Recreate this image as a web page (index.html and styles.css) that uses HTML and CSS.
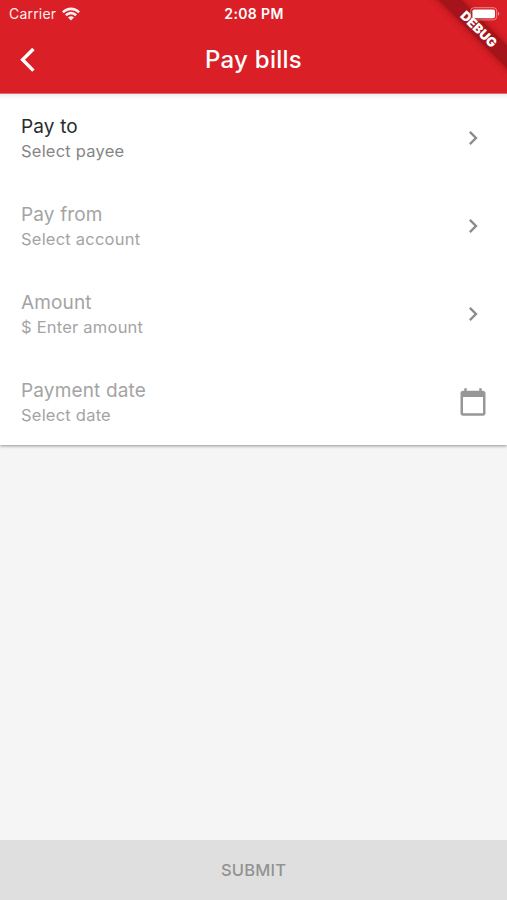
FILE: index.html
```
<!DOCTYPE html>
<html lang="en">
<head>
<meta charset="utf-8">
<title>Pay bills</title>
<link rel="stylesheet" href="styles.css">
</head>
<body>
<div class="screen">
  <header class="header">
    <div class="status">
      <div class="carrier"><span>Carrier</span>
        <svg class="wifi" viewBox="0 0 18 14"><path d="M0 4.4C5-.9 13-.9 18 4.4L16.2 6.2C12.2 2.1 5.8 2.1 1.8 6.2ZM3 7.4C6.5 4 11.5 4 15 7.4L13.2 9.2C10.8 6.9 7.2 6.9 4.8 9.2ZM6 10.5C7.8 8.9 10.2 8.9 12 10.5L9 13.6Z"/></svg>
      </div>
      <div class="clock">2:08 PM</div>
      <svg class="battery" viewBox="0 0 30 14"><rect x=".7" y=".7" width="26" height="12.2" rx="3.3" fill="none" stroke="#fff" stroke-opacity=".45"/><rect x="2.4" y="2.4" width="22.6" height="8.8" rx="1.8" fill="#fff"/><path d="M28 4.8Q30.6 6.8 28 8.8Z" fill="#fff" fill-opacity=".55"/></svg>
    </div>
    <div class="toolbar">
      <svg class="back" viewBox="0 0 16 26"><path d="M13.4 2 2.6 12.8l10.8 10.8"/></svg>
      <h1 class="title">Pay bills</h1>
    </div>
    <div class="banner">DEBUG</div>
  </header>
  <main class="card">
    <div class="row active"><div><div class="label">Pay to</div><div class="hint">Select payee</div></div><svg class="chevron" viewBox="0 0 24 24"><path d="M10 6 8.59 7.41 13.17 12l-4.58 4.59L10 18l6-6z"/></svg></div>
    <div class="row"><div><div class="label">Pay from</div><div class="hint">Select account</div></div><svg class="chevron" viewBox="0 0 24 24"><path d="M10 6 8.59 7.41 13.17 12l-4.58 4.59L10 18l6-6z"/></svg></div>
    <div class="row"><div><div class="label">Amount</div><div class="hint">$ Enter amount</div></div><svg class="chevron" viewBox="0 0 24 24"><path d="M10 6 8.59 7.41 13.17 12l-4.58 4.59L10 18l6-6z"/></svg></div>
    <div class="row"><div><div class="label">Payment date</div><div class="hint">Select date</div></div><svg class="calendar" viewBox="0 0 24 24"><path d="M20 3h-1V1h-2v2H7V1H5v2H4c-1.1 0-2 .9-2 2v16c0 1.1.9 2 2 2h16c1.1 0 2-.9 2-2V5c0-1.1-.9-2-2-2zm0 18H4V8h16v13z"/></svg></div>
  </main>
  <button class="submit" disabled>SUBMIT</button>
</div>
</body>
</html>
```

FILE: styles.css
```
* { box-sizing: border-box; }
body { margin: 0; font-family: Inter, "Liberation Sans", sans-serif; }
svg { display: block; flex: none; }
.screen { height: 900px; display: flex; flex-direction: column; background: #f5f5f5; overflow: hidden; }
.header { position: relative; height: 94px; background: #da1f26; color: #fff; overflow: hidden; border-bottom: 1px solid #d96e72; }
.status { position: relative; z-index: 2; display: grid; grid-template-columns: 1fr auto 1fr; align-items: center; height: 27px; padding: 0 7px 0 8px; font-size: 14px; }
.carrier { display: flex; align-items: center; gap: 6px; padding-left: 1px; letter-spacing: .2px; opacity: .93; }
.wifi { width: 18px; height: 14px; fill: #fff; }
.clock { font-size: 14px; font-weight: 600; letter-spacing: .35px; }
.battery { width: 30px; height: 14px; justify-self: end; }
.toolbar { display: grid; grid-template-columns: 1fr auto 1fr; align-items: center; height: 66px; padding: 0 20px; }
.back { width: 16px; height: 26px; fill: none; stroke: #fff; stroke-width: 3.4; }
.title { margin: 0; font-size: 24px; font-weight: 500; line-height: 30px; letter-spacing: .25px; }
.banner { position: absolute; left: 408.5px; top: 21px; width: 140px; height: 16px; line-height: 16px; transform: rotate(45deg); background: #a4141a; box-shadow: 0 0 7px rgba(80,0,0,.45); text-align: center; font-size: 13px; font-weight: 900; }
.card { background: linear-gradient(#ededed, #fff 5px); height: 351px; box-shadow: 0 1px 3px rgba(0,0,0,.4); }
.row { display: flex; align-items: center; justify-content: space-between; height: 88px; padding: 0 20px 0 21px; color: #a4a4a4; }
.label { font-size: 19px; line-height: 24px; letter-spacing: .15px; padding-top: 3px; }
.hint { font-size: 16.5px; line-height: 25px; letter-spacing: .22px; }
.active .label { color: #2a2a2a; }
.active .hint { color: #858585; }
.chevron { width: 28px; height: 28px; fill: #8c8c8c; }
.calendar { width: 30px; height: 30px; fill: #979797; margin-right: -1px; }
.submit { margin: auto 0 0; height: 60px; border: 0; background: #dfdfdf; color: #929292; font: 500 16.5px Inter, "Liberation Sans", sans-serif; letter-spacing: .2px; }
```
